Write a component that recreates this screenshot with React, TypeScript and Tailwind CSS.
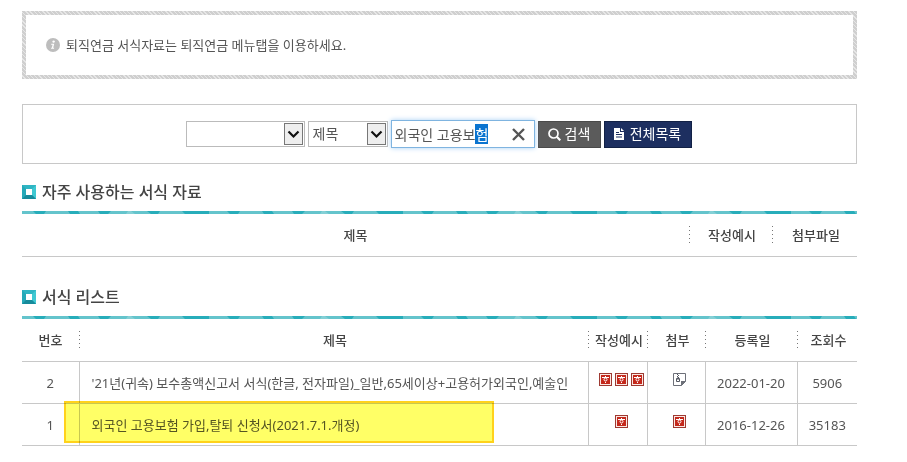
import { useEffect, useRef } from 'react';
import type { ReactNode } from 'react';

const rows = [
    {
        no: 2,
        title: "'21년(귀속) 보수총액신고서 서식(한글, 전자파일)_일반,65세이상+고용허가외국인,예술인",
        examples: 3,
        attachment: 'zip',
        date: '2022-01-20',
        views: 5906,
    },
    {
        no: 1,
        title: '외국인 고용보험 가입,탈퇴 신청서(2021.7.1.개정)',
        examples: 1,
        attachment: 'hwp',
        date: '2016-12-26',
        views: 35183,
        highlighted: true,
    },
];

const dotted =
    'pl-[3px] bg-[repeating-linear-gradient(#777_0_1px,transparent_1px_4px)] bg-[length:1px_17px] bg-[position:left_center] bg-no-repeat';

function InfoIcon() {
    return (
        <svg width="14" height="14" viewBox="0 0 14 14" aria-hidden="true">
            <circle cx="7" cy="7" r="7" fill="#bdbdbd" />
            <circle cx="7.6" cy="3.6" r="1.2" fill="#fff" />
            <path d="M5.3 5.8h2.9l-1 4h1l-.2 1H5l.2-1h.6l.8-3H5.1z" fill="#fff" />
        </svg>
    );
}

function HwpIcon() {
    return (
        <svg width="13" height="13" viewBox="0 0 13 13" aria-hidden="true">
            <rect width="13" height="13" fill="#9e3a32" />
            <rect x="1" y="1" width="11" height="11" fill="#fbe9e4" />
            <rect x="2" y="2" width="9" height="9" fill="#c4281b" />
            <path d="M6 3h1v1h3v1H3V4h3z" fill="#fff" />
            <circle cx="6.5" cy="6.5" r="1.5" fill="none" stroke="#fff" />
            <path d="M6 9h1v1H6z" fill="#fff" />
        </svg>
    );
}

function ZipIcon() {
    return (
        <svg width="13" height="13" viewBox="0 0 13 13" aria-hidden="true">
            <path d="M.5.5h12v8l-4 4h-8z" fill="#fff" stroke="#6d7079" />
            <path d="M8 13V8h5z" fill="#6d7079" />
            <path d="M4 1h1v1H4zM5 2h1v1H5zM4 3h1v1H4zM5 4h1v1H5z" fill="#555963" />
            <path d="M3.5 5.5h3v3h-3z" fill="#fff" stroke="#555963" />
            <path d="M5 4v3" stroke="#555963" />
        </svg>
    );
}

function Chevron() {
    return (
        <span className="pointer-events-none absolute inset-y-[2px] right-[2px] flex w-[19px] items-center justify-center border border-[#777] bg-[#eee]">
            <svg width="13" height="9" viewBox="0 0 13 9" aria-hidden="true">
                <path d="M1.5 1.5l5 5 5-5" fill="none" stroke="#111" strokeWidth="2.2" />
            </svg>
        </span>
    );
}

function TealBar() {
    return (
        <svg className="block h-[3px] w-full" aria-hidden="true">
            <defs>
                <pattern id="teal" width="194" height="3" patternUnits="userSpaceOnUse">
                    <rect width="194" height="3" fill="#64c4cc" />
                    <path d="M11 0H24L22 3H14zM46 0H56L58 3H48zM76 0H89L86 3H78zM125 0H138L136 3H129zM160 0H187V3H163z" fill="#27adba" />
                    <path d="M106 0H109L113 3H104z" fill="#84d0d6" />
                </pattern>
            </defs>
            <rect width="100%" height="3" fill="url(#teal)" />
        </svg>
    );
}

function SectionTitle({ children }: { children: ReactNode }) {
    return (
        <h2 className="flex h-7 items-center gap-[6px] text-[16px] font-medium text-[#444]">
            <svg width="14" height="14" viewBox="0 0 14 14" aria-hidden="true">
                <path d="M0 0h14v14H0z" fill="#25a9b8" />
                <path d="M0 0h14l-4 4H4z" fill="#2fb5c3" />
                <path d="M14 0v14l-4-4V4z" fill="#3fc8d2" />
                <path d="M0 14h14l-4-4H4z" fill="#168b9b" />
                <path d="M4 4h6v6H4z" fill="#fff" />
            </svg>
            {children}
        </h2>
    );
}

export default function App() {
    const keyword = useRef<HTMLInputElement>(null);

    useEffect(() => {
        keyword.current?.focus();
        keyword.current?.setSelectionRange(7, 8);
    }, []);

    return (
        <main className="bg-white pt-[11px] pr-[50px] pb-4 pl-[22px] font-['Noto_Sans','Noto_Sans_CJK_KR',sans-serif] text-[13px] leading-5 text-[#555]">
            {/* Notice */}
            <div className="bg-[repeating-linear-gradient(45deg,#cfcfcf_0_2px,#e6e6e6_2px_3px)] p-1">
                <p className="flex h-[60px] items-center gap-[6px] bg-white px-5">
                    <InfoIcon />
                    퇴직연금 서식자료는 퇴직연금 메뉴탭을 이용하세요.
                </p>
            </div>

            {/* Search */}
            <form
                className="mt-[25px] flex h-[60px] items-center justify-center gap-[3px] border border-[#c8c8c8] pr-[2px] text-[14px]"
                onSubmit={(e) => e.preventDefault()}
            >
                <div className="relative">
                    <select aria-label="분류" className="block h-[26px] w-[119px] appearance-none border border-[#bbb] bg-white px-1">
                        <option></option>
                    </select>
                    <Chevron />
                </div>
                <div className="relative">
                    <select aria-label="검색 조건" className="block h-[26px] w-[80px] appearance-none border border-[#bbb] bg-white px-1">
                        <option>제목</option>
                    </select>
                    <Chevron />
                </div>
                <div className="relative">
                    <input
                        ref={keyword}
                        aria-label="검색어"
                        defaultValue="외국인 고용보험"
                        className="block h-7 w-[144px] border border-[#7fb4e0] bg-white pr-7 pl-[3px] caret-transparent shadow-[0_0_5px_#a9d0f5] outline-none selection:bg-[#0a74d0] selection:text-white"
                    />
                    <button type="button" aria-label="지우기" className="absolute inset-y-0 right-[10px]">
                        <svg width="13" height="13" viewBox="0 0 13 13" aria-hidden="true">
                            <path d="M1 1l11 11m0-11L1 12" stroke="#555" strokeWidth="2.4" />
                        </svg>
                    </button>
                </div>
                <button type="submit" className="flex h-[27px] w-[63px] items-center justify-center gap-1 border border-[#4a4a4a] bg-[#5b5b5b] text-white">
                    <svg width="13" height="13" viewBox="0 0 13 13" aria-hidden="true">
                        <circle cx="5.5" cy="5.5" r="4.5" fill="none" stroke="#fff" strokeWidth="1.7" />
                        <path d="M8.8 8.8l3.5 3.5" stroke="#fff" strokeWidth="2.2" />
                    </svg>
                    검색
                </button>
                <button type="button" className="flex h-[27px] w-[88px] items-center justify-center gap-[6px] border border-[#122145] bg-[#1d2f60] text-white">
                    <svg width="10" height="12" viewBox="0 0 10 12" aria-hidden="true">
                        <path d="M0 0h6v4h4v8H0z" fill="#fff" />
                        <path d="M7 0l3 3H7z" fill="#fff" />
                        <path d="M2 4.5h3M2 6.5h6M2 9h6" stroke="#1d2f60" />
                    </svg>
                    전체목록
                </button>
            </form>

            {/* Frequently used forms */}
            <section className="mt-[14px]">
                <SectionTitle>자주 사용하는 서식 자료</SectionTitle>
                <div className="mt-[5px]">
                    <TealBar />
                </div>
                <table className="w-full table-fixed border-collapse text-[#444]">
                    <thead>
                        <tr className="h-[42px] border-b border-[#c8c8c8]">
                            <th className="font-medium">제목</th>
                            <th className={`w-[83px] font-medium ${dotted}`}>작성예시</th>
                            <th className={`w-[85px] font-medium ${dotted}`}>첨부파일</th>
                        </tr>
                    </thead>
                </table>
            </section>

            {/* Form list */}
            <section className="mt-[26px]">
                <SectionTitle>서식 리스트</SectionTitle>
                <div className="mt-[5px]">
                    <TealBar />
                </div>
                <table className="w-full table-fixed border-collapse text-center">
                    <thead className="text-[#444]">
                        <tr className="h-[43px] border-b border-[#c8c8c8]">
                            <th className="w-[57px] font-medium">번호</th>
                            <th className={`font-medium ${dotted}`}>제목</th>
                            <th className={`w-[59px] font-medium ${dotted}`}>작성예시</th>
                            <th className={`w-[58px] font-medium ${dotted}`}>첨부</th>
                            <th className={`w-[92px] font-medium ${dotted}`}>등록일</th>
                            <th className={`w-[60px] font-medium ${dotted}`}>조회수</th>
                        </tr>
                    </thead>
                    <tbody className="divide-y divide-[#c8c8c8] border-b border-[#c8c8c8]">
                        {rows.map((row) => (
                            <tr key={row.no} className="h-[42px] divide-x divide-[#c8c8c8]">
                                <td>{row.no}</td>
                                <td className="relative pl-3 text-left whitespace-nowrap">
                                    <a href="#">{row.title}</a>
                                    {row.highlighted && (
                                        <span className="pointer-events-none absolute -top-[3px] -left-4 h-[42px] w-[430px] border-2 border-[#ffd21c] bg-[#ffff66] mix-blend-multiply" />
                                    )}
                                </td>
                                <td>
                                    <div className="flex justify-center gap-[3px] pb-[6px] pl-[7px]">
                                        {Array.from({ length: row.examples }, (_, i) => (
                                            <HwpIcon key={i} />
                                        ))}
                                    </div>
                                </td>
                                <td>
                                    <div className="flex justify-center pb-[6px] pl-[7px]">
                                        {row.attachment === 'zip' ? <ZipIcon /> : <HwpIcon />}
                                    </div>
                                </td>
                                <td>{row.date}</td>
                                <td>{row.views}</td>
                            </tr>
                        ))}
                    </tbody>
                </table>
            </section>
        </main>
    );
}
